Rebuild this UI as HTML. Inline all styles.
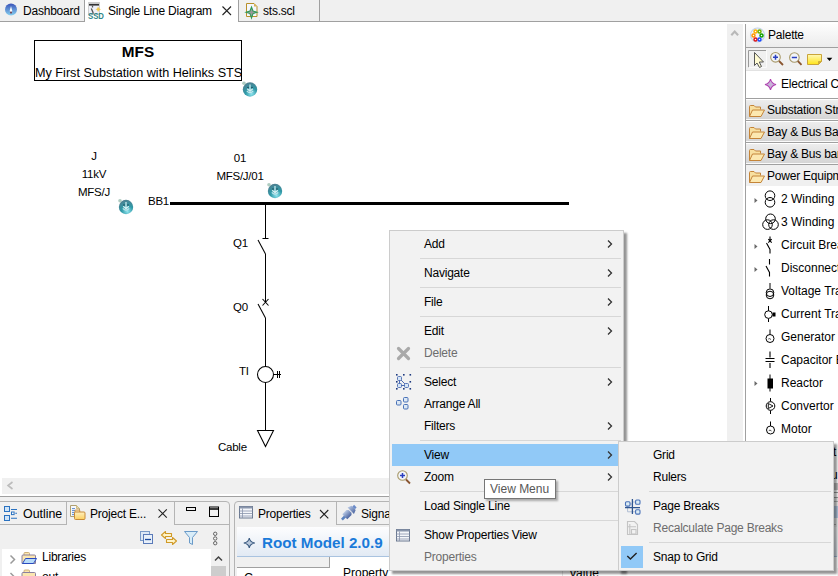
<!DOCTYPE html>
<html><head><meta charset="utf-8">
<style>
*{margin:0;padding:0;box-sizing:border-box}
html,body{width:838px;height:576px;overflow:hidden;background:#fff;font-family:"Liberation Sans",sans-serif;font-size:12px;letter-spacing:-0.22px;color:#000}
.a{position:absolute}
.t{position:absolute;white-space:nowrap;line-height:14px}
svg{position:absolute;overflow:visible}
</style></head><body>

<!-- ===== top editor tab bar ===== -->
<div class="a" style="left:0;top:0;width:838px;height:22px;background:#f0f0f0;border-bottom:1px solid #a0a0a0"></div>
<!-- Dashboard tab right border -->
<div class="a" style="left:84px;top:0;width:1px;height:22px;background:#a0a0a0"></div>
<!-- active tab -->
<div class="a" style="left:85px;top:0;width:153px;height:22px;background:#fff"></div>
<div class="a" style="left:238px;top:0;width:1px;height:22px;background:#a0a0a0"></div>
<div class="a" style="left:319px;top:0;width:1px;height:22px;background:#a0a0a0"></div>
<svg width="838" height="22" style="left:0;top:0">
  <defs>
    <linearGradient id="gb" x1="0" y1="0" x2="0" y2="1"><stop offset="0" stop-color="#3a52b8"/><stop offset="1" stop-color="#86d0f0"/></linearGradient>
    <radialGradient id="gt" cx="0.6" cy="0.7" r="0.7"><stop offset="0" stop-color="#7fdde6"/><stop offset="0.6" stop-color="#2f9aa8"/><stop offset="1" stop-color="#2a6f86"/></radialGradient>
    <linearGradient id="gn" x1="0" y1="0" x2="0" y2="1"><stop offset="0" stop-color="#fff7b0"/><stop offset="1" stop-color="#ffe21c"/></linearGradient>
  </defs>
  <circle cx="11" cy="9.5" r="6" fill="url(#gb)"/>
  <path d="M11 6 L12.3 11 L11 13.5 L9.7 11Z" fill="#fff"/>
  <path d="M11 11 L12 12.5 L11 14 L10 12.5Z" fill="#6a3040"/>
  <!-- SSD -->
  <rect x="88.5" y="2.5" width="11" height="12" fill="#eef0f8" stroke="#d0d0d0"/>
  <rect x="89" y="2.5" width="10" height="1.5" fill="#c8c8c8"/>
  <rect x="89" y="4" width="10" height="1.6" fill="#333"/>
  <path d="M92.5 5.5 V7.5 M91.3 8.5 L93 12.5 V14" stroke="#555" stroke-width="1.3" fill="none"/>
  <path d="M98 6.5 L99.2 8.6 L101 9.2 L99.3 10 L98 12 L97.2 10 L95.5 9.2 L97.3 8.5Z" fill="#f2c94a"/>
  <text x="88" y="18.6" font-family="Liberation Sans" font-weight="bold" font-size="8.4" fill="#2f8688" textLength="16" lengthAdjust="spacingAndGlyphs" letter-spacing="0">SSD</text>
  <!-- close X -->
  <path d="M222.5 6.5 L231 15 M231 6.5 L222.5 15" stroke="#222" stroke-width="1.1"/>
  <!-- sts.scl page -->
  <path d="M246.5 3.5 H254 L257 6.5 V16.5 H246.5Z" fill="#f4f6fc" stroke="#b8902a" stroke-width="1"/>
  <path d="M254 3.5 V6.5 H257Z" fill="#d8b050"/>
  <path d="M251.5 7 L253 11 L257 12.3 L253 13.6 L251.5 18 L250 13.6 L246 12.3 L250 11Z" fill="#9a9a9a" stroke="#2f9a55" stroke-width="1.1"/>
</svg>
<div class="t" style="left:23px;top:4px">Dashboard</div>
<div class="t" style="left:108px;top:4px">Single Line Diagram</div>
<div class="t" style="left:263px;top:4px">sts.scl</div>

<!-- ===== canvas ===== -->
<div class="a" style="left:34px;top:40px;width:208px;height:41px;border:1px solid #000"></div>
<div class="t" style="left:34px;top:44px;width:208px;text-align:center;font-weight:bold;font-size:15.3px;line-height:16px;letter-spacing:0">MFS</div>
<div class="t" style="left:35px;top:66px;font-size:12.65px;letter-spacing:0">My First Substation with Helinks STS</div>

<div class="t" style="left:60px;top:149px;width:68px;text-align:center;font-size:11.5px;letter-spacing:-0.25px">J</div>
<div class="t" style="left:60px;top:167px;width:68px;text-align:center;font-size:11.5px;letter-spacing:-0.25px">11kV</div>
<div class="t" style="left:60px;top:185px;width:68px;text-align:center;font-size:11.5px;letter-spacing:-0.25px">MFS/J</div>
<div class="t" style="left:148px;top:194px;font-size:11.5px;letter-spacing:-0.25px">BB1</div>
<div class="t" style="left:200px;top:151px;width:80px;text-align:center;font-size:11.5px;letter-spacing:-0.25px">01</div>
<div class="t" style="left:200px;top:169px;width:80px;text-align:center;font-size:11.5px;letter-spacing:-0.25px">MFS/J/01</div>
<div class="t" style="left:233px;top:236px;font-size:11.5px;letter-spacing:-0.25px">Q1</div>
<div class="t" style="left:233px;top:300px;font-size:11.5px;letter-spacing:-0.25px">Q0</div>
<div class="t" style="left:239px;top:364px;font-size:11.5px;letter-spacing:-0.25px">TI</div>
<div class="t" style="left:218px;top:440px;font-size:11.5px;letter-spacing:-0.25px">Cable</div>

<svg width="838" height="576" style="left:0;top:0">
  <rect x="170" y="202" width="399" height="3" fill="#000"/>
  <g stroke="#000" stroke-width="1.05" fill="none">
    <line x1="265.5" y1="205" x2="265.5" y2="238.5"/>
    <line x1="262.5" y1="238.5" x2="268.5" y2="238.5"/>
    <line x1="258" y1="240" x2="265.5" y2="254"/>
    <line x1="265.5" y1="254" x2="265.5" y2="302"/>
    <line x1="262.5" y1="299" x2="268.5" y2="305.5"/>
    <line x1="268.5" y1="299" x2="262.5" y2="305.5"/>
    <line x1="258" y1="304" x2="265.5" y2="318"/>
    <line x1="265.5" y1="318" x2="265.5" y2="366"/>
    <circle cx="265.5" cy="374.5" r="8"/>
    <line x1="273.5" y1="374.5" x2="281" y2="374.5"/>
    <line x1="277.5" y1="371" x2="277.5" y2="378"/>
    <line x1="279.5" y1="371" x2="279.5" y2="378"/>
    <line x1="265.5" y1="382.5" x2="265.5" y2="430.5"/>
    <path d="M257.5 430.5 H273.5 L265.5 446.5 Z"/>
  </g>
</svg>

<svg width="838" height="476" style="left:0;top:0">
  <g id="glob">
   <circle cx="250" cy="89.5" r="7.2" fill="url(#gt2)"/>
   <circle cx="244" cy="83.3" r="1.8" fill="#7aaa98" opacity=".6"/>
   <path d="M250 84.5 V91 M247.2 88.7 L250 91.3 L252.8 88.7" stroke="#d8eef2" stroke-width="1.2" fill="none"/>
   <path d="M246.8 90.8 Q250 94.5 253.2 90.8" stroke="#c8e8ee" stroke-width="1.1" fill="none"/>
   <circle cx="248" cy="87.5" r=".7" fill="#234"/><circle cx="252" cy="87.5" r=".7" fill="#234"/>
  </g>
  <use href="#glob" x="-124" y="117.5"/>
  <use href="#glob" x="25" y="101.5"/>
  <defs><radialGradient id="gt2" cx="0.6" cy="0.8" r="0.8"><stop offset="0" stop-color="#90e4ee"/><stop offset="0.5" stop-color="#2f9aa8"/><stop offset="1" stop-color="#4f7f90"/></radialGradient></defs>
</svg>
<!-- canvas vertical scrollbar -->
<div class="a" style="left:727px;top:24px;width:16px;height:454px;background:#f0f0f0"></div>
<!-- horizontal scrollbar -->
<div class="a" style="left:2px;top:478px;width:725px;height:16px;background:#f0f0f0"></div>
<div class="a" style="left:0;top:496px;width:838px;height:1px;background:#a0a0a0"></div>
<svg width="838" height="500" style="left:0;top:0">
  <path d="M731.3 35.3 L734.7 31.5 L738.1 35.3" stroke="#b8b8b8" stroke-width="2.1" fill="none"/>
  <path d="M12.5 482 L8 485.5 L12.5 489" stroke="#bcbcbc" stroke-width="1.6" fill="none"/>
</svg>

<!-- ===== palette ===== -->
<div class="a" style="left:745px;top:24px;width:1px;height:473px;background:#a0a0a0"></div>
<div class="a" style="left:746px;top:24px;width:92px;height:24px;background:linear-gradient(#fdfdfd,#ececec);border-bottom:1px solid #a0a0a0"></div>
<div class="t" style="left:768px;top:28px">Palette</div>
<div class="a" style="left:746px;top:48px;width:92px;height:22px;background:#f0f0f0"></div>
<div class="a" style="left:746px;top:70px;width:92px;height:28px;background:#fff;border-top:1px solid #e2e2e2"></div>
<div class="t" style="left:781px;top:77px">Electrical C</div>

<!-- drawers -->
<div class="a" style="left:746px;top:98px;width:92px;height:1px;background:#a0a0a0"></div>
<div class="a" style="left:746px;top:99px;width:92px;height:21px;background:linear-gradient(#ededed,#d5d5d5);border-top:1px solid #fff;border-bottom:1px solid #fafafa"></div>
<div class="a" style="left:746px;top:120px;width:92px;height:1px;background:#a0a0a0"></div>
<div class="a" style="left:746px;top:121px;width:92px;height:21px;background:linear-gradient(#ededed,#d5d5d5);border-top:1px solid #fff;border-bottom:1px solid #fafafa"></div>
<div class="a" style="left:746px;top:142px;width:92px;height:1px;background:#a0a0a0"></div>
<div class="a" style="left:746px;top:143px;width:92px;height:21px;background:linear-gradient(#ededed,#d5d5d5);border-top:1px solid #fff;border-bottom:1px solid #fafafa"></div>
<div class="a" style="left:746px;top:164px;width:92px;height:1px;background:#a0a0a0"></div>
<div class="a" style="left:746px;top:165px;width:92px;height:21px;background:#f0f0f0"></div>
<div class="t" style="left:767px;top:103px">Substation Structure</div>
<div class="t" style="left:767px;top:125px">Bay &amp; Bus Bar</div>
<div class="t" style="left:767px;top:147px">Bay &amp; Bus bar</div>
<div class="t" style="left:767px;top:169px">Power Equipment</div>

<div class="t" style="left:781px;top:192px;font-size:12px;letter-spacing:0">2 Winding</div>
<div class="t" style="left:781px;top:215px;font-size:12px;letter-spacing:0">3 Winding</div>
<div class="t" style="left:781px;top:238px;font-size:12px;letter-spacing:0">Circuit Breaker</div>
<div class="t" style="left:781px;top:261px;font-size:12px;letter-spacing:0">Disconnector</div>
<div class="t" style="left:781px;top:284px;font-size:12px;letter-spacing:0">Voltage Transformer</div>
<div class="t" style="left:781px;top:307px;font-size:12px;letter-spacing:0">Current Transformer</div>
<div class="t" style="left:781px;top:330px;font-size:12px;letter-spacing:0">Generator</div>
<div class="t" style="left:781px;top:353px;font-size:12px;letter-spacing:0">Capacitor Bank</div>
<div class="t" style="left:781px;top:376px;font-size:12px;letter-spacing:0">Reactor</div>
<div class="t" style="left:781px;top:399px;font-size:12px;letter-spacing:0">Convertor</div>
<div class="t" style="left:781px;top:422px;font-size:12px;letter-spacing:0">Motor</div>
<svg width="92" height="476" style="left:746px;top:0">
  <!-- palette header icon -->
  <circle cx="11.5" cy="35" r="7" fill="#f4f8fe" stroke="#c2d2ea" stroke-width="1.2"/>
  <circle cx="9.5" cy="31.5" r="1.5" fill="#fff" stroke="#ffb000" stroke-width="1.5"/>
  <circle cx="13.5" cy="31.5" r="1.5" fill="#fff" stroke="#70b000" stroke-width="1.5"/>
  <circle cx="7.5" cy="35.5" r="1.5" fill="#fff" stroke="#ff9400" stroke-width="1.5"/>
  <circle cx="15.5" cy="35.5" r="1.5" fill="#fff" stroke="#10a000" stroke-width="1.5"/>
  <circle cx="9.5" cy="39.5" r="1.5" fill="#fff" stroke="#e01818" stroke-width="1.5"/>
  <circle cx="13.5" cy="39.5" r="1.5" fill="#fff" stroke="#1a48ff" stroke-width="1.5"/>
  <!-- toolbar: selected box -->
  <path d="M2.5 67.5 V50.5 H20" stroke="#9a9a9a" fill="none"/>
  <path d="M20.5 50.5 V67.5 H2.5" stroke="#fbfbfb" fill="none"/>
  <path d="M8.5 52.5 V65.5 L11 63 L13.5 67.5 L15.5 66.5 L13.3 62 H17.5Z" fill="#fffbd2" stroke="#555" stroke-width="1" stroke-linejoin="round"/>
  <!-- zoom + -->
  <circle cx="29.5" cy="57.3" r="4.8" fill="#f2f4f8" stroke="#a99a6a" stroke-width="1.1"/>
  <path d="M27 57.3 H32 M29.5 54.8 V59.8" stroke="#2a3fc0" stroke-width="1.5"/>
  <path d="M33 61 L37 65" stroke="#8a5530" stroke-width="1.8"/>
  <!-- zoom - -->
  <circle cx="48.4" cy="57.5" r="4.8" fill="#f2f4f8" stroke="#a99a6a" stroke-width="1.1"/>
  <path d="M45.8 57.5 H51" stroke="#2a3fc0" stroke-width="1.5"/>
  <path d="M51.8 61 L55.5 64.8" stroke="#8a5530" stroke-width="1.8"/>
  <!-- note -->
  <path d="M61.5 54.5 H75.5 V61.5 L72.5 64.5 H61.5Z" fill="url(#gn2)" stroke="#c9a43a" stroke-width="1"/>
  <path d="M72.5 64.5 V61.5 H75.5" fill="#d8b030" stroke="#c9a43a" stroke-width=".8"/>
  <path d="M80.7 57.8 H86.3 L83.5 61Z" fill="#000"/>
  <defs><linearGradient id="gn2" x1="0" y1="0" x2="0" y2="1"><stop offset="0" stop-color="#fff8b8"/><stop offset="1" stop-color="#ffe418"/></linearGradient></defs>
  <!-- electrical star -->
  <path d="M24.5 79 Q25.5 83.5 30 84.5 Q25.5 85.5 24.5 90 Q23.5 85.5 19 84.5 Q23.5 83.5 24.5 79Z" fill="#c8b4d8" stroke="#b040b0" stroke-width="1.1"/>
  <!-- folders -->
  <g id="fold">
    <path d="M3.5 116.5 V106.5 Q3.5 105.5 4.5 105.5 H8 L9.5 107 H14.5 V109.5" fill="#f8e0a0" stroke="#c48438" stroke-width="1"/>
    <path d="M3.5 116.5 L6.5 110 H18.5 L15 116.5Z" fill="#fce8b0" stroke="#c48438" stroke-width="1" stroke-linejoin="round"/>
  </g>
  <use href="#fold" y="22"/>
  <use href="#fold" y="44"/>
  <use href="#fold" y="66"/>
  <!-- item arrows -->
  <g fill="#6a6a6a">
    <path d="M8.5 198 L11.5 200.5 L8.5 203Z"/>
    <path d="M8.5 244 L11.5 246.5 L8.5 249Z"/>
    <path d="M8.5 267 L11.5 269.5 L8.5 272Z"/>
    <path d="M8.5 381 L11.5 383.5 L8.5 386Z"/>
  </g>
  <g stroke="#000" stroke-width="1" fill="none">
    <circle cx="24" cy="195.7" r="4.8"/>
    <circle cx="24" cy="202.3" r="4.8"/>
    <circle cx="24.5" cy="218.8" r="4.8"/>
    <circle cx="21.5" cy="224.6" r="4.8"/>
    <circle cx="27.5" cy="224.6" r="4.8"/>
    <!-- CB -->
    <path d="M24 236.5 V241.5 M22.3 239.2 L25.7 242.6 M25.7 239.2 L22.3 242.6 M20.5 243 L24 249.5 V253.5" stroke-width="1.1"/>
    <!-- disconnector -->
    <path d="M23.5 259 V264.5 M20 266 L23.5 272.5 V276.5" stroke-width="1.1"/>
    <!-- VT -->
    <path d="M24 283 V288.5"/>
    <circle cx="24" cy="292.7" r="3.8"/>
    <circle cx="24" cy="295" r="3.8"/>
    <!-- CT -->
    <path d="M22.5 306 V311 M22.5 318.5 V322"/>
    <circle cx="22.5" cy="314.6" r="3.8"/>
    <rect x="27" y="313" width="2" height="3" fill="#000"/>
    <!-- generator -->
    <path d="M24 329.5 V334.5"/>
    <circle cx="24" cy="338.5" r="4"/>
    <path d="M22.3 339 Q23.5 338 25 339.5" stroke-width=".7"/>
    <!-- capacitor -->
    <path d="M24 351.5 V357.5 M19.5 358.5 H28.5 M19.5 361.5 H28.5 M24 363 V368" stroke-width="1.1"/>
    <!-- reactor -->
    <path d="M24 374.5 V391.5"/>
    <rect x="22" y="379" width="4.5" height="9" fill="#000"/>
    <!-- convertor -->
    <path d="M24.5 398 V401.5 M24.5 410.5 V414"/>
    <circle cx="24.5" cy="406" r="4.3"/>
    <path d="M22.3 403.5 L27 406 L22.3 408.5Z" stroke-width=".9"/>
    <!-- motor -->
    <path d="M24.5 421.5 V426"/>
    <circle cx="24.5" cy="430" r="4"/>
    <path d="M22.8 430.5 Q24 429.5 25.5 431" stroke-width=".7"/>
  </g>
</svg>

<!-- ===== bottom panels ===== -->
<div class="a" style="left:0;top:497px;width:838px;height:79px;background:#f0f0f0"></div>
<!-- left panel -->
<div class="a" style="left:-4px;top:501px;width:234px;height:90px;border:1px solid #b4b4b4;border-top-right-radius:4px"></div>
<div class="a" style="left:0;top:524px;width:229px;height:1px;background:#b4b4b4"></div>
<div class="a" style="left:66px;top:502px;width:1px;height:22px;background:#b4b4b4"></div>
<div class="a" style="left:67px;top:502px;width:107px;height:23px;background:#f0f0f0"></div>
<div class="a" style="left:174px;top:502px;width:1px;height:23px;background:#b4b4b4"></div>
<div class="t" style="left:23px;top:506.5px;font-size:12.4px;letter-spacing:0">Outline</div>
<div class="t" style="left:90px;top:507px">Project E...</div>
<!-- tree -->
<div class="a" style="left:2px;top:549px;width:209px;height:27px;background:#fff"></div>
<div class="t" style="left:42px;top:550px">Libraries</div>
<div class="t" style="left:42px;top:570px">out</div>
<div class="a" style="left:211px;top:549px;width:15px;height:27px;background:#f0f0f0"></div>
<div class="a" style="left:211px;top:566px;width:15px;height:10px;background:#cdcdcd"></div>
<!-- right panel -->
<div class="a" style="left:234px;top:501px;width:620px;height:90px;border:1px solid #b4b4b4;border-top-left-radius:4px"></div>
<div class="a" style="left:336px;top:524px;width:500px;height:1px;background:#b4b4b4"></div>
<div class="a" style="left:336px;top:502px;width:1px;height:22px;background:#b4b4b4"></div>
<div class="t" style="left:258px;top:507px">Properties</div>
<div class="t" style="left:361px;top:507px">Signals</div>
<div class="a" style="left:237px;top:527px;width:600px;height:29px;background:linear-gradient(#fdfdfe,#e2eaf4)"></div>
<div class="a" style="left:237px;top:556px;width:600px;height:1px;background:#a9c3e0"></div>
<div class="t" style="left:262px;top:534px;font-size:15.2px;line-height:18px;font-weight:bold;color:#1a7ad9;letter-spacing:0">Root Model 2.0.9</div>
<div class="a" style="left:237px;top:568px;width:600px;height:8px;background:#fff"></div>
<div class="a" style="left:329px;top:557px;width:600px;height:11px;background:#fff"></div>
<div class="a" style="left:237px;top:567px;width:93px;height:1px;background:#a0a0a0"></div>
<div class="a" style="left:329px;top:557px;width:1px;height:11px;background:#a0a0a0"></div>
<div class="t" style="left:244px;top:571px;font-size:12.5px">C</div>
<div class="t" style="left:343px;top:566px;font-size:12px;letter-spacing:0">Property</div>
<div class="t" style="left:569px;top:566px;font-size:12px;letter-spacing:0">Value</div>
<div class="a" style="left:562px;top:569px;width:1px;height:7px;background:#e4e4e4"></div>
<svg width="390" height="80" style="left:0;top:496px">
  <!-- outline icon -->
  <g fill="#cfe4f8" stroke="#2a72c0" stroke-width="1">
    <rect x="4.5" y="10.5" width="5" height="5"/>
    <rect x="4.5" y="19.5" width="5" height="5"/>
    <rect x="11.5" y="16" width="2.6" height="2.6" fill="#fff" stroke-width="1"/>
  </g>
  <path d="M11 13.5 H17 M15.3 17.3 H17 M11 22.3 H17" stroke="#2a72c0" stroke-width="1.1"/>
  <!-- project explorer icon -->
  <path d="M70.5 9.5 H76.5 L79.5 12.5 V20.5 H70.5Z" fill="#f6f8fc" stroke="#b0a070" stroke-width="1"/>
  <path d="M76.5 9.5 V12.5 H79.5" fill="#e8d8a8" stroke="#c8b070" stroke-width=".8"/>
  <path d="M72 12.6 H75 M72 14.6 H75 M72 16.6 H75 M72 18.6 H74.5" stroke="#5a88d0" stroke-width="1"/>
  <defs><linearGradient id="gfo" x1="0" y1="0" x2="0" y2="1"><stop offset="0" stop-color="#fff0c0"/><stop offset="1" stop-color="#fcd060"/></linearGradient></defs>
  <path d="M75 16.5 V14.8 Q75 14 75.8 14 H79 Q79.8 14 79.8 14.8 V16" fill="#fbe8b8" stroke="#c88a38" stroke-width=".9"/>
  <rect x="74.5" y="16" width="10.5" height="7.5" rx="1" fill="url(#gfo)" stroke="#c88a38" stroke-width="1"/>
  <!-- close X -->
  <path d="M158.5 13.3 L166.8 21.6 M166.8 13.3 L158.5 21.6" stroke="#222" stroke-width="1.1"/>
  <!-- min/max -->
  <rect x="186.5" y="11.5" width="9" height="3" fill="none" stroke="#000" stroke-width="1"/>
  <rect x="209.5" y="11" width="9" height="9.5" fill="none" stroke="#000" stroke-width="1"/>
  <path d="M209.5 13 H218.5" stroke="#000" stroke-width="1.5"/>
  <!-- toolbar icons -->
  <rect x="140.5" y="35.5" width="9" height="9" fill="#dce8f6" stroke="#7a9ac8" stroke-width="1"/>
  <rect x="143.5" y="38.5" width="9" height="9" fill="#e8f0fa" stroke="#5a7ab8" stroke-width="1"/>
  <path d="M145 43.5 H151" stroke="#1a4aa0" stroke-width="1.3"/>
  <path d="M165.5 35.5 L161.5 39 L165.5 42.5 V40.5 H171.5 V37.5 H165.5Z" fill="#fff4c8" stroke="#d09a28" stroke-width="1.1" stroke-linejoin="round"/>
  <path d="M172.5 41.5 L176.5 45 L172.5 48.5 V46.5 H166.5 V43.5 H172.5Z" fill="#fff4c8" stroke="#d09a28" stroke-width="1.1" stroke-linejoin="round"/>
  <path d="M184.5 35.5 H197.5 L192.5 41.5 V48.5 L189.5 47 V41.5Z" fill="#d8ecf8" stroke="#6a9ac8" stroke-width="1"/>
  <g fill="none" stroke="#555" stroke-width=".9">
    <circle cx="215.2" cy="37.8" r="1.7"/><circle cx="215.2" cy="42.5" r="1.7"/><circle cx="215.2" cy="47.2" r="1.7"/>
  </g>
  <!-- tree -->
  <path d="M10.5 59.5 L14.5 63.5 L10.5 67.5" stroke="#9a9a9a" stroke-width="1.5" fill="none"/>
  <g id="tf">
  <path d="M24 59.5 V57.5 Q24 56.5 25 56.5 H28.5 Q29.5 56.5 29.5 57.5 V59.5" fill="#fbe6b0" stroke="#c8a870" stroke-width=".9"/>
  <path d="M22 67.5 V60 Q22 59 23 59 H34.5 Q35.5 59 35.5 60 V67.5Z" fill="#fbe6b0" stroke="#8a80a0" stroke-width="1"/>
  </g>
  <path d="M22.5 67.5 L25.5 62.5 H36.5 L33.5 67.5Z" fill="#b8dcf8" stroke="#2a4ac0" stroke-width="1" stroke-linejoin="round"/>
  <use href="#tf" y="17.5"/>
  <path d="M10.5 77 L14 80.5" stroke="#9a9a9a" stroke-width="1.5" fill="none"/>
  <path d="M215 64.5 L218.5 61 L222 64.5" stroke="#444" stroke-width="1.5" fill="none"/>
  <!-- properties icon -->
  <rect x="239.5" y="10.5" width="13" height="11.5" fill="#f4f6fa" stroke="#6a7890" stroke-width="1"/>
  <rect x="239.5" y="10.5" width="13" height="2" fill="#8a96ac"/>
  <path d="M239.5 15 H252.5 M239.5 17.5 H252.5 M239.5 20 H252.5 M242.5 12.5 V22" stroke="#8a96ac" stroke-width=".8"/>
  <path d="M320 14 L328.3 22.3 M328.3 14 L320 22.3" stroke="#222" stroke-width="1.1"/>
  <!-- signals icon -->
  <defs><linearGradient id="gsig" x1="0" y1="0" x2="0" y2="1"><stop offset="0" stop-color="#b8c8e4"/><stop offset="1" stop-color="#4a64a0"/></linearGradient></defs>
  <g transform="translate(349 16.5) rotate(-45)">
    <rect x="-10" y="-1.3" width="5" height="2.6" fill="#5a82c0"/>
    <path d="M-6 -3.5 H0 L1.5 -2 V2 L0 3.5 H-6Z" fill="url(#gsig)"/>
    <path d="M2.5 -4.5 L6.5 -3 V3 L2.5 4.5Z" fill="url(#gsig)"/>
    <rect x="6.5" y="-1.8" width="2.5" height="3.6" fill="#6a8ac8"/>
  </g>
  <!-- root star -->
  <path d="M249.3 42 Q250 46.3 254.8 47 Q250 47.7 249.3 52 Q248.6 47.7 243.8 47 Q248.6 46.3 249.3 42Z" fill="#b8c8dc" stroke="#3a5a80" stroke-width="1.1"/>
</svg>

<!-- right strip (behind submenu) -->
<div class="a" style="left:834px;top:441px;width:4px;height:56px;background:#fff"></div>
<div class="t" style="left:833px;top:445px;font-size:12px;letter-spacing:0">t</div>
<div class="t" style="left:831px;top:468px;font-size:12px;letter-spacing:0">u</div>
<div class="a" style="left:834px;top:483px;width:4px;height:7px;background:#c4c4c4"></div>
<div class="a" style="left:834px;top:492px;width:4px;height:1px;background:#a0a0a0"></div>
<div class="a" style="left:834px;top:497px;width:4px;height:1px;background:#a0a0a0"></div>
<div class="a" style="left:834px;top:506px;width:4px;height:12px;background:#b8cce4"></div>
<!-- ===== context menu ===== -->
<div class="a" style="left:389px;top:230px;width:235px;height:341px;background:#f2f2f2;border:1px solid #cccccc;box-shadow:3px 3px 2px rgba(0,0,0,.42)"></div>
<div class="a" style="left:392px;top:444px;width:226px;height:22px;background:#91c9f7"></div>
<div class="t" style="left:424px;top:237px">Add</div>
<div class="t" style="left:424px;top:266px">Navigate</div>
<div class="t" style="left:424px;top:295px">File</div>
<div class="t" style="left:424px;top:324px">Edit</div>
<div class="t" style="left:424px;top:346px;color:#6d6d6d">Delete</div>
<div class="t" style="left:424px;top:375px">Select</div>
<div class="t" style="left:424px;top:397px">Arrange All</div>
<div class="t" style="left:424px;top:419px">Filters</div>
<div class="t" style="left:424px;top:448px">View</div>
<div class="t" style="left:424px;top:470px">Zoom</div>
<div class="t" style="left:424px;top:499px">Load Single Line</div>
<div class="t" style="left:424px;top:528px">Show Properties View</div>
<div class="t" style="left:424px;top:550px;color:#6d6d6d">Properties</div>
<svg width="240" height="345" style="left:389px;top:230px">
  <g stroke="#333" stroke-width="1.3" fill="none">
    <path d="M219 10.5 L222.5 14 L219 17.5"/>
    <path d="M219 39.5 L222.5 43 L219 46.5"/>
    <path d="M219 68.5 L222.5 72 L219 75.5"/>
    <path d="M219 97.5 L222.5 101 L219 104.5"/>
    <path d="M219 148.5 L222.5 152 L219 155.5"/>
    <path d="M219 192.5 L222.5 196 L219 199.5"/>
    <path d="M219 221.5 L222.5 225 L219 228.5"/>
    <path d="M219 243.5 L222.5 247 L219 250.5"/>
  </g>
  <!-- delete X -->
  <path d="M9.5 118.5 L19.5 128.5 M19.5 118.5 L9.5 128.5" stroke="#a9a9a9" stroke-width="3.2" stroke-linecap="round"/>
  <!-- select -->
  <g fill="#1e3a80">
    <rect x="7" y="144" width="1.6" height="1.6"/><rect x="14" y="144" width="1.6" height="1.6"/><rect x="20.5" y="144" width="1.6" height="1.6"/>
    <rect x="7" y="151" width="1.6" height="1.6"/><rect x="20.5" y="151" width="1.6" height="1.6"/>
    <rect x="7" y="158" width="1.6" height="1.6"/><rect x="14" y="158" width="1.6" height="1.6"/><rect x="20.5" y="158" width="1.6" height="1.6"/>
  </g>
  <path d="M10.5 148.5 V155.5 H17.5 L10.5 148.5" stroke="#3a5aa8" stroke-width=".9" fill="none"/>
  <g fill="#d6e6f6" stroke="#4a6ab0" stroke-width=".9">
    <rect x="8.5" y="146.5" width="4" height="4" rx="1"/>
    <rect x="8.5" y="153.5" width="4" height="4" rx="1"/>
    <rect x="15.5" y="153.5" width="4" height="4" rx="1"/>
  </g>
  <!-- arrange all -->
  <g fill="#dce8f4" stroke="#4a72b8" stroke-width="1">
    <rect x="7.5" y="170.5" width="4.5" height="4.5" rx="1"/>
    <rect x="14.5" y="167.5" width="4.5" height="4.5" rx="1"/>
    <rect x="14.5" y="174.5" width="4.5" height="4.5" rx="1"/>
  </g>
  <!-- zoom -->
  <circle cx="13.5" cy="245.5" r="4.8" fill="#f2f4f8" stroke="#a99a6a" stroke-width="1.1"/>
  <path d="M11 245.5 H16 M13.5 243 V248" stroke="#2a3fc0" stroke-width="1.5"/>
  <path d="M17 249.5 L21 253.5" stroke="#8a5530" stroke-width="1.8"/>
  <!-- table -->
  <rect x="7.5" y="299.5" width="13" height="11.5" fill="#f4f6fa" stroke="#6a7890" stroke-width="1"/>
  <rect x="7.5" y="299.5" width="13" height="2" fill="#8a96ac"/>
  <path d="M7.5 304 H20.5 M7.5 306.5 H20.5 M7.5 309 H20.5 M10.5 301.5 V311" stroke="#8a96ac" stroke-width=".8"/>
</svg>
<div class="a" style="left:420px;top:258px;width:201px;height:1px;background:#d7d7d7"></div>
<div class="a" style="left:420px;top:287px;width:201px;height:1px;background:#d7d7d7"></div>
<div class="a" style="left:420px;top:316px;width:201px;height:1px;background:#d7d7d7"></div>
<div class="a" style="left:420px;top:367px;width:201px;height:1px;background:#d7d7d7"></div>
<div class="a" style="left:420px;top:440px;width:201px;height:1px;background:#d7d7d7"></div>
<div class="a" style="left:420px;top:491px;width:201px;height:1px;background:#d7d7d7"></div>
<div class="a" style="left:420px;top:520px;width:201px;height:1px;background:#d7d7d7"></div>

<!-- ===== submenu ===== -->
<div class="a" style="left:618px;top:441px;width:216px;height:130px;background:#f2f2f2;border:1px solid #cccccc;box-shadow:3px 3px 2px rgba(0,0,0,.42)"></div>
<div class="a" style="left:621px;top:546px;width:22px;height:22px;background:#91c9f7"></div>
<div class="t" style="left:653px;top:448px">Grid</div>
<div class="t" style="left:653px;top:470px">Rulers</div>
<div class="t" style="left:653px;top:499px">Page Breaks</div>
<div class="t" style="left:653px;top:521px;color:#6d6d6d">Recalculate Page Breaks</div>
<div class="t" style="left:653px;top:550px">Snap to Grid</div>
<svg width="40" height="130" style="left:618px;top:441px">
  <path d="M10 63 H14.4 M14.4 61 H19 M9.6 65 V70.8 H19" stroke="#a8b8d0" stroke-width=".9" fill="none"/>
  <path d="M14.4 58 V73 M7 66.6 H22" stroke="#2f5590" stroke-width="1.3"/>
  <g fill="#dcecf4" stroke="#4a72b8" stroke-width="1.1">
    <rect x="7.5" y="60.8" width="4.5" height="4.3" rx="1"/>
    <rect x="17.6" y="59" width="4.4" height="4.3" rx="1"/>
    <rect x="17.6" y="68.8" width="4.4" height="4.3" rx="1"/>
  </g>
  <!-- recalc -->
  <path d="M9.5 80.5 H16.5 L19.5 83.5 V93.5 H9.5Z" fill="none" stroke="#c4c4c4" stroke-width="1.1"/>
  <path d="M11.8 83 V93 M9.5 85.8 H18" stroke="#c4c4c4" stroke-width="1.1"/>
  <rect x="13.5" y="88.5" width="4.5" height="4.5" fill="none" stroke="#c4c4c4" stroke-width="1.1"/>
  <!-- check -->
  <path d="M9.3 115 L12.4 118 L18.6 111.9" stroke="#222" stroke-width="1.4" fill="none"/>
</svg>
<div class="a" style="left:649px;top:491px;width:182px;height:1px;background:#d7d7d7"></div>
<div class="a" style="left:649px;top:542px;width:182px;height:1px;background:#d7d7d7"></div>

<!-- tooltip -->
<div class="a" style="left:484px;top:479px;width:72px;height:20px;background:#fff;border:1px solid #767676;box-shadow:2px 2px 2px rgba(0,0,0,.3)"></div>
<div class="t" style="left:490px;top:482px;font-size:12px;letter-spacing:0;color:#575757">View Menu</div>

</body></html>
